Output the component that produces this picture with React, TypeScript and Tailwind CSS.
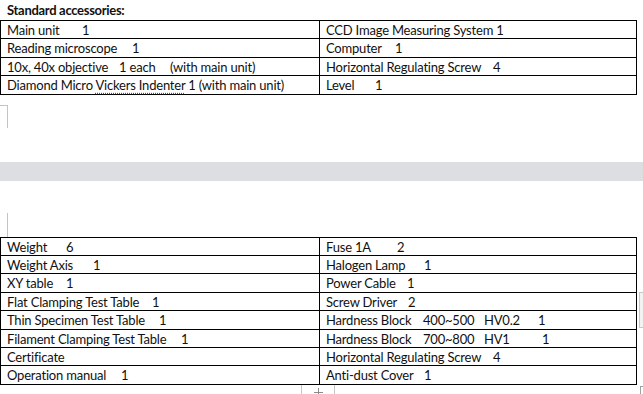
type Seg = [string, number];
type Row = [Seg[], Seg[]];

const table1: Row[] = [
  [[["Main unit", 0], ["1", 75]], [["CCD Image Measuring System 1", 0]]],
  [[["Reading microscope", 0], ["1", 125]], [["Computer", 0], ["1", 69]]],
  [
    [["10x, 40x objective", 0], ["1 each", 112], ["(with main unit)", 163]],
    [["Horizontal Regulating Screw", 0], ["4", 167]],
  ],
  [[["Diamond Micro Vickers Indenter 1 (with main unit)", 0]], [["Level", 0], ["1", 49]]],
];

const table2: Row[] = [
  [[["Weight", 0], ["6", 59]], [["Fuse 1A", 0], ["2", 71]]],
  [[["Weight Axis", 0], ["1", 86]], [["Halogen Lamp", 0], ["1", 98]]],
  [[["XY table", 0], ["1", 59]], [["Power Cable", 0], ["1", 81]]],
  [[["Flat Clamping Test Table", 0], ["1", 145]], [["Screw Driver", 0], ["2", 82]]],
  [
    [["Thin Specimen Test Table", 0], ["1", 152]],
    [["Hardness Block", 0], ["400~500", 97], ["HV0.2", 158], ["1", 212]],
  ],
  [
    [["Filament Clamping Test Table", 0], ["1", 174]],
    [["Hardness Block", 0], ["700~800", 97], ["HV1", 158], ["1", 216]],
  ],
  [[["Certificate", 0]], [["Horizontal Regulating Screw", 0], ["4", 167]]],
  [[["Operation manual", 0], ["1", 114]], [["Anti-dust Cover", 0], ["1", 98]]],
];

function Cell({ segs, left }: { segs: Seg[]; left?: boolean }) {
  return (
    <div
      className={
        "flex h-full items-start pl-[6px] pt-[1px] whitespace-nowrap " +
        (left ? "w-[319px] border-r border-black" : "flex-1")
      }
    >
      {segs.map(([t, x], i) => {
        const next = segs[i + 1];
        const w = next ? next[1] - x : undefined;
        if (t.startsWith("Diamond")) {
          return (
            <span key={i}>
              Diamond Micro{" "}
              <span className="underline decoration-dotted decoration-[#d02020] underline-offset-[3px]">
                Vickers Indenter
              </span>{" "}
              1 (with main unit)
            </span>
          );
        }
        return (
          <span key={i} className="shrink-0" style={w ? { width: w } : undefined}>
            {t}
          </span>
        );
      })}
    </div>
  );
}

function Table({ rows }: { rows: Row[] }) {
  return (
    <div className="w-[637px] border-t border-l border-r border-black tracking-[-0.2px]">
      {rows.map((r, i) => (
        <div key={i} className="flex h-[18.4px] border-b border-black">
          <Cell segs={r[0]} left />
          <Cell segs={r[1]} />
        </div>
      ))}
    </div>
  );
}

export default function App() {
  return (
    <div className="relative h-[394px] w-[643px] overflow-hidden bg-white font-['Lato','Liberation_Sans',sans-serif] text-[13px] leading-[16px] text-[#111]">
      <div className="h-[20px] pl-[7px] pt-[2px] font-bold tracking-[-0.3px]">Standard accessories:</div>
      <Table rows={table1} />

      <div className="mt-[10px] h-[23px] w-[8px] border-t border-r border-[#c4c4c4]" />
      <div className="mt-[34px] h-[19px] bg-[#dddee1]" />
      <div className="ml-[7px] mt-[32px] h-[24px] w-px bg-[#c4c4c4]" />
      <Table rows={table2} />

      {/* word's table insert handle + side marks */}
      <div className="absolute left-[301px] top-[385px] flex h-[10px] w-[34px] justify-center border-x border-[#c8c8c8] pt-[3px]">
        <div className="flex h-[9px] w-[9px] flex-col items-center">
          <div className="h-[4px] w-px bg-[#8a8a8a]" />
          <div className="h-px w-[9px] bg-[#8a8a8a]" />
          <div className="h-[4px] w-px bg-[#8a8a8a]" />
        </div>
      </div>
      <div className="absolute left-[639px] top-[292px] h-[36px] w-[4px] border-t border-l border-b border-[#c8c8c8] bg-[#f2f2f2]" />
      <div className="absolute left-[640px] top-[386px] h-[8px] w-[3px] border-t border-l border-[#a0a0a0]" />
    </div>
  );
}
